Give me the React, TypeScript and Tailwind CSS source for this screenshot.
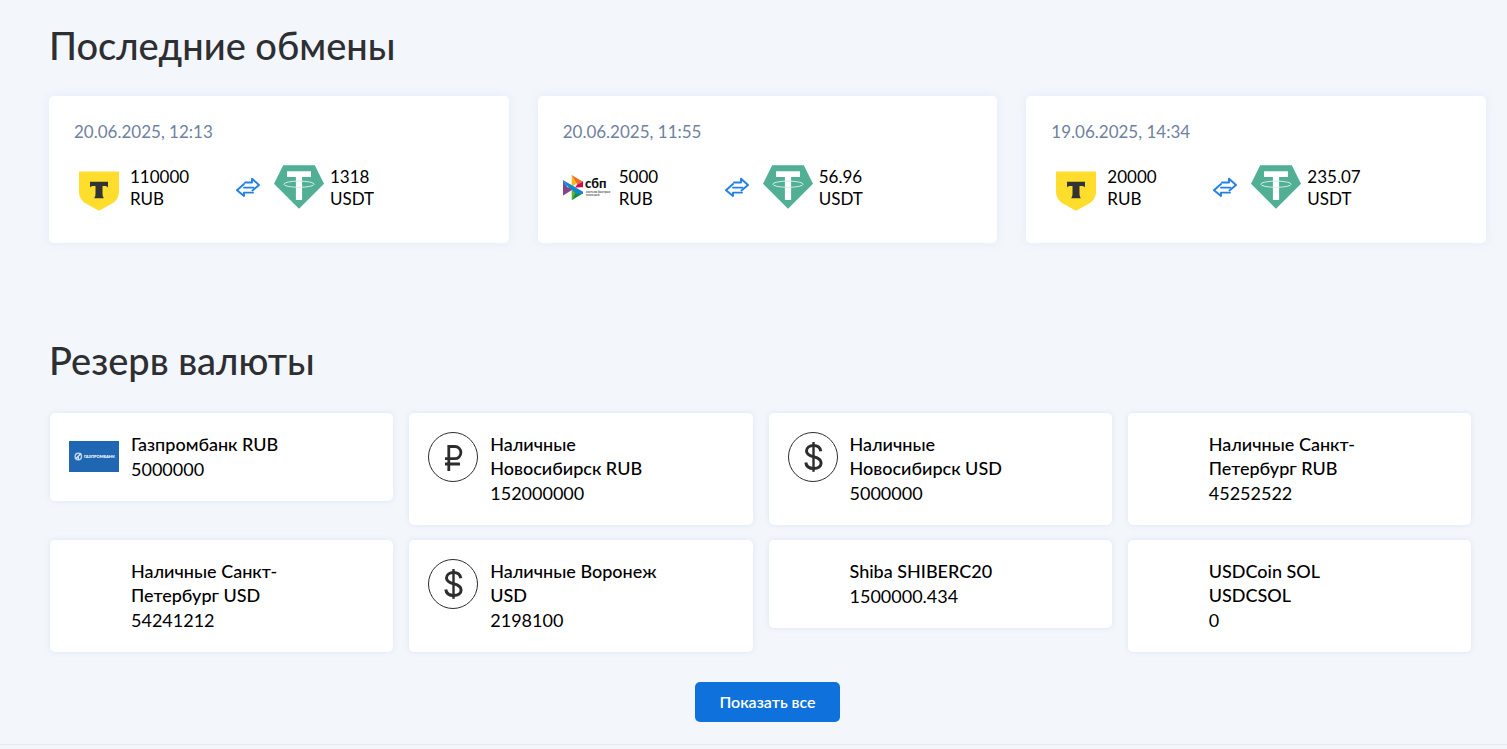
import React from 'react';

type LogoName = 'tbank' | 'sbp' | 'gazprom' | 'rub' | 'usd' | 'none';

interface Exchange {
  date: string;
  logo: LogoName;
  from: string;
  to: string;
}

interface Reserve {
  logo: LogoName;
  name: string;
  amount: string;
}

const exchanges: Exchange[] = [
  { date: '20.06.2025, 12:13', logo: 'tbank', from: '110000', to: '1318' },
  { date: '20.06.2025, 11:55', logo: 'sbp', from: '5000', to: '56.96' },
  { date: '19.06.2025, 14:34', logo: 'tbank', from: '20000', to: '235.07' },
];

const reserves: Reserve[] = [
  { logo: 'gazprom', name: 'Газпромбанк RUB', amount: '5000000' },
  { logo: 'rub', name: 'Наличные Новосибирск RUB', amount: '152000000' },
  { logo: 'usd', name: 'Наличные Новосибирск USD', amount: '5000000' },
  { logo: 'none', name: 'Наличные Санкт-Петербург RUB', amount: '45252522' },
  { logo: 'none', name: 'Наличные Санкт-Петербург USD', amount: '54241212' },
  { logo: 'usd', name: 'Наличные Воронеж USD', amount: '2198100' },
  { logo: 'none', name: 'Shiba SHIBERC20', amount: '1500000.434' },
  { logo: 'none', name: 'USDCoin SOL USDCSOL', amount: '0' },
];

const TBankLogo: React.FC = () => (
  <svg viewBox="0 0 50 50" className="size-[50px]" aria-hidden="true">
    <path d="M5 9.500h40V29.500c0 5-2.500 9.500-6.800 12L25 48.800 11.800 41.500C7.500 39 5 34.500 5 29.500z" fill="#ffdd2d" />
    <path
      d="M16 19.800v5.600c.8-.9 2.200-1.400 3.800-1.400h1.700v7.500c0 2-.5 3.600-1.400 4.700h9.800c-.9-1.100-1.400-2.700-1.400-4.700V24h1.700c1.600 0 3 .5 3.800 1.400v-5.600z"
      fill="#333"
    />
  </svg>
);

const SbpLogo: React.FC = () => (
  <svg viewBox="0 0 50 50" className="size-[50px]" aria-hidden="true">
    <path d="M0 18l5 8-5 7.500z" fill="#5b57a2" />
    <path d="M0 33.500V26l9-1v3z" fill="#87428a" />
    <path d="M8.700 13l5 8-5 4z" fill="#fab718" />
    <path d="M8.700 13l10.800 6.400-5.200 3.100z" fill="#ed6f26" />
    <path d="M14.300 22.500l5.700-3.200v6l-8 .2z" fill="#d90751" />
    <path d="M8.700 28l5 2-5 8.200z" fill="#63b22f" />
    <path d="M8.700 38.200l4-7.700 7 1z" fill="#0a8f4b" />
    <path d="M0 18l20 11.800v2.200l-6 .2L3.500 23.500z" fill="#1487c9" />
    <text x="22" y="26" fontSize="13" fontWeight="900" fontFamily="Lato, sans-serif" fill="#111">
      сбп
    </text>
    <text x="23" y="31" fontSize="3" fontFamily="Lato, sans-serif" fill="#111">
      система быстрых
    </text>
    <text x="23" y="34" fontSize="3" fontFamily="Lato, sans-serif" fill="#111">
      платежей
    </text>
  </svg>
);

const TetherLogo: React.FC = () => (
  <svg viewBox="0 0 50 44" className="h-11 w-[50px] shrink-0" aria-hidden="true">
    <path d="M9.200.2h31.600L50 18.800 25 43.800 0 18.800z" fill="#50af95" />
    <path d="M13 6.300h24v5.600h-8.900V35h-6.200V11.900H13z" fill="#fff" />
    <ellipse cx="25" cy="19.200" rx="15.200" ry="3.100" fill="none" stroke="#d5ece5" strokeWidth="1" />
  </svg>
);

const ArrowsIcon: React.FC = () => (
  <svg
    viewBox="0 0 24 20"
    className="h-5 w-6 shrink-0"
    fill="none"
    stroke="#2280e6"
    strokeWidth="1.900"
    strokeLinejoin="round"
    strokeLinecap="round"
    aria-hidden="true"
  >
    <path d="M9 5.500h7V1.700L23 8l-6.500 5.500" />
    <path d="M8 10.600h9.500M8 7L1 13.300 8 19v-3.400h9" />
  </svg>
);

const GazpromLogo: React.FC = () => (
  <svg viewBox="0 0 50 50" className="size-[50px]" aria-hidden="true">
    <rect y="9" width="50" height="31" fill="#2067b3" />
    <circle cx="9.300" cy="24.500" r="3.200" fill="none" stroke="#b9d3ee" strokeWidth="1.400" />
    <path d="M7 26.500l5-5M9.300 24.500v3" stroke="#dceafa" strokeWidth="1.200" />
    <text x="15" y="26" fontSize="4" fontWeight="900" fontFamily="Lato, sans-serif" fill="#fff">
      ГАЗПРОМБАНК
    </text>
  </svg>
);

const RubLogo: React.FC = () => (
  <svg viewBox="0 0 50 50" className="size-[50px]" fill="none" stroke="#2d2d2d" aria-hidden="true">
    <circle cx="25" cy="25" r="24.500" />
    <path d="M20.800 39V14.500h6a6.100 6.100 0 0 1 0 12.200H17M17 32h15" strokeWidth="2.800" />
  </svg>
);

const UsdLogo: React.FC = () => (
  <svg viewBox="0 0 50 50" className="size-[50px]" fill="none" stroke="#2d2d2d" aria-hidden="true">
    <circle cx="25" cy="25" r="24.500" />
    <path
      d="M32.800 19.200c-.6-3.500-3.500-5.700-7.200-5.700-4.200 0-7.100 2.300-7.100 5.600 0 3.500 2.800 4.600 7.100 5.700 4.700 1.100 7.500 2.700 7.500 6.200 0 3.400-3 5.500-7.400 5.500s-7.500-2.300-7.900-6"
      strokeWidth="3"
    />
    <path d="M25.500 10v29.800" strokeWidth="2.400" />
  </svg>
);

const Logo: React.FC<{ name: LogoName }> = ({ name }) => (
  <div className="size-[50px] shrink-0">
    {name === 'tbank' && <TBankLogo />}
    {name === 'sbp' && <SbpLogo />}
    {name === 'gazprom' && <GazpromLogo />}
    {name === 'rub' && <RubLogo />}
    {name === 'usd' && <UsdLogo />}
  </div>
);

const ExchangeCard: React.FC<{ item: Exchange }> = ({ item }) => (
  <article className="rounded-[5px] bg-white px-[25px] pt-[25px] pb-[31px] shadow-[0_0_10px_#e3ecf8]">
    <time className="block text-[17px] leading-[22px] text-[#6f819f]">{item.date}</time>
    <div className="mt-[19px] flex items-center text-[17px] leading-[22px]">
      <Logo name={item.logo} />
      <p className="ml-1.5 w-24 pt-0.5">
        {item.from}
        <br />
        RUB
      </p>
      <div className="mr-3.5 ml-2.5">
        <ArrowsIcon />
      </div>
      <TetherLogo />
      <p className="ml-1.5 pt-0.5">
        {item.to}
        <br />
        USDT
      </p>
    </div>
  </article>
);

const ReserveCard: React.FC<{ item: Reserve }> = ({ item }) => (
  <article className="flex gap-3 rounded-[5px] bg-white px-[19px] py-[19px] shadow-[0_0_5px_#dbe6f5]">
    <Logo name={item.logo} />
    <div className="max-w-[190px] text-lg">
      <h3 className="leading-6 font-medium">{item.name}</h3>
      <p className="leading-[26px]">{item.amount}</p>
    </div>
  </article>
);

const App: React.FC = () => {
  return (
    <main className="bg-[#f3f6fb] font-['Lato',sans-serif] text-black">
      <div className="border-b border-[#e4e9f2] pt-[22px] pr-[21px] pb-[22px] pl-[49px]">
        <section>
          <h2 className="text-[38px] leading-[46px] font-medium text-[#2d2f33]">Последние обмены</h2>
          <div className="mt-7 grid grid-cols-3 gap-[29px]">
            {exchanges.map((item) => (
              <ExchangeCard key={item.date} item={item} />
            ))}
          </div>
        </section>

        <section className="mt-[94px]">
          <h2 className="text-[38px] leading-[46px] font-medium text-[#2d2f33]">Резерв валюты</h2>
          <div className="mt-[30px] mr-[15px] ml-px grid grid-cols-4 items-start gap-x-4 gap-y-[15px]">
            {reserves.map((item) => (
              <ReserveCard key={item.name} item={item} />
            ))}
          </div>
          <div className="mt-[30px] flex justify-center">
            <button type="button" className="h-10 rounded-[5px] bg-[#0f72dc] px-6 text-base font-semibold text-white">
              Показать все
            </button>
          </div>
        </section>
      </div>
      <div className="h-1" />
    </main>
  );
};

export default App;
